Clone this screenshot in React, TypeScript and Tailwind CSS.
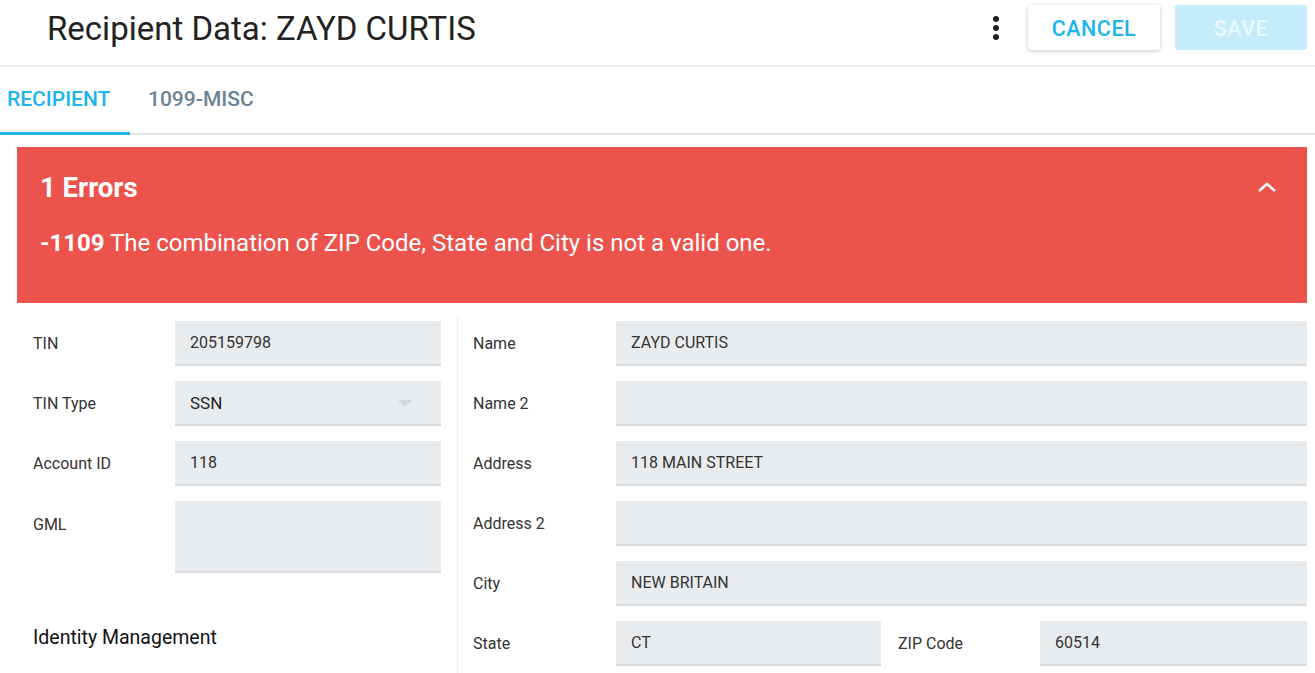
import React from "react";

const font = { fontFamily: "Roboto, 'Liberation Sans', sans-serif" };

function Field({ value, tall, select }: { value?: string; tall?: boolean; select?: boolean }) {
  return (
    <div
      className={`relative flex ${tall ? "h-[72px] items-start" : "h-[45px] items-center"} bg-[#e9ecef] border-b-2 border-[#dadde1] px-[15px] text-[16px] text-[#333]`}
    >
      {value && <span className={select ? "text-[17px] text-[#222] mt-[2px]" : ""}>{value}</span>}
      {select && (
        <span className="absolute right-[29px] top-[19px] w-0 h-0 border-l-[7px] border-r-[7px] border-t-[7px] border-l-transparent border-r-transparent border-t-[#d3d6da]" />
      )}
    </div>
  );
}

function Label({ children, top }: { children: React.ReactNode; top?: boolean }) {
  return (
    <div className={`flex ${top ? "items-start pt-[12px]" : "items-center"} text-[16px] text-[#333]`}>{children}</div>
  );
}

export default function App() {
  return (
    <div style={font} className="w-[1315px] h-[673px] overflow-hidden bg-white">
      {/* Header */}
      <div className="h-[65px] flex items-center border-b-2 border-[#e9eef2] box-content">
        <h1 className="ml-[47px] text-[33px] text-[#222] leading-none -mt-[9px] font-normal">Recipient Data: ZAYD CURTIS</h1>
        <div className="ml-auto flex items-center -mt-[10px]">
          <div className="flex flex-col gap-[3px] items-center mr-[29px]">
            <span className="w-[6px] h-[6px] rounded-full bg-[#222]" />
            <span className="w-[6px] h-[6px] rounded-full bg-[#222]" />
            <span className="w-[6px] h-[6px] rounded-full bg-[#222]" />
          </div>
          <button className="w-[132px] h-[45px] pt-[3px] rounded-[3px] bg-white shadow-[0_1px_4px_rgba(0,0,0,0.22)] text-[#1cb5ec] text-[21.5px] font-medium tracking-[0.5px]">
            CANCEL
          </button>
          <button className="ml-[15px] mr-[8px] w-[132px] h-[45px] pt-[3px] rounded-[3px] bg-[#c4ecfa] text-[#e9f8fe] text-[21.5px] font-medium tracking-[0.5px]">
            SAVE
          </button>
        </div>
      </div>

      {/* Tabs */}
      <div className="h-[68px] flex border-b-2 border-[#e3e5e8]">
        <div className="w-[130px] pl-[7px] flex items-center border-b-[3px] border-[#1cb5ec] -mb-[2px] text-[#1cb5ec] text-[21px] font-medium">
          RECIPIENT
        </div>
        <div className="pl-[18px] flex items-center -mb-[2px] border-b-[3px] border-transparent text-[#6c8398] text-[21px] font-medium">
          1099-MISC
        </div>
      </div>

      {/* Error panel */}
      <div className="ml-[17px] mr-[8px] mt-[12px] h-[156px] bg-[#ec534c] text-white px-[23px] pt-[27px] relative">
        <div className="text-[27.5px] font-bold leading-none">1 Errors</div>
        <div className="mt-[29px] text-[24px] leading-none">
          <span className="font-bold">-1109</span> The combination of ZIP Code, State and City is not a valid one.
        </div>
        <svg className="absolute right-[30px] top-[34px]" width="20" height="12" viewBox="0 0 20 12">
          <path d="M2 10 L10 3 L18 10" stroke="white" strokeWidth="2.6" fill="none" />
        </svg>
      </div>

      {/* Form */}
      <div className="ml-[17px] mr-[8px] mt-[13px] flex">
        <div className="w-[440px] pl-[16px] pr-[16px] pt-[5px]">
          <div className="grid grid-cols-[142px_266px] gap-y-[15px]">
            <Label>TIN</Label>
            <Field value="205159798" />
            <Label>TIN Type</Label>
            <Field value="SSN" select />
            <Label>Account ID</Label>
            <Field value="118" />
            <Label top>GML</Label>
            <Field tall />
          </div>
          <div className="mt-[50px] text-[19.5px] text-[#111]">Identity Management</div>
        </div>
        <div className="w-px bg-[#eceef0] h-[360px]" />
        <div className="flex-1 pl-[15px] pt-[5px]">
          <div className="grid grid-cols-[143px_1fr] gap-y-[15px]">
            <Label>Name</Label>
            <Field value="ZAYD CURTIS" />
            <Label>Name 2</Label>
            <Field />
            <Label>Address</Label>
            <Field value="118 MAIN STREET" />
            <Label>Address 2</Label>
            <Field />
            <Label>City</Label>
            <Field value="NEW BRITAIN" />
            <Label>State</Label>
            <div className="grid grid-cols-[265px_159px_1fr]">
              <Field value="CT" />
              <div className="flex items-center pl-[17px] text-[16px] text-[#333]">ZIP Code</div>
              <Field value="60514" />
            </div>
          </div>
        </div>
      </div>
    </div>
  );
}
